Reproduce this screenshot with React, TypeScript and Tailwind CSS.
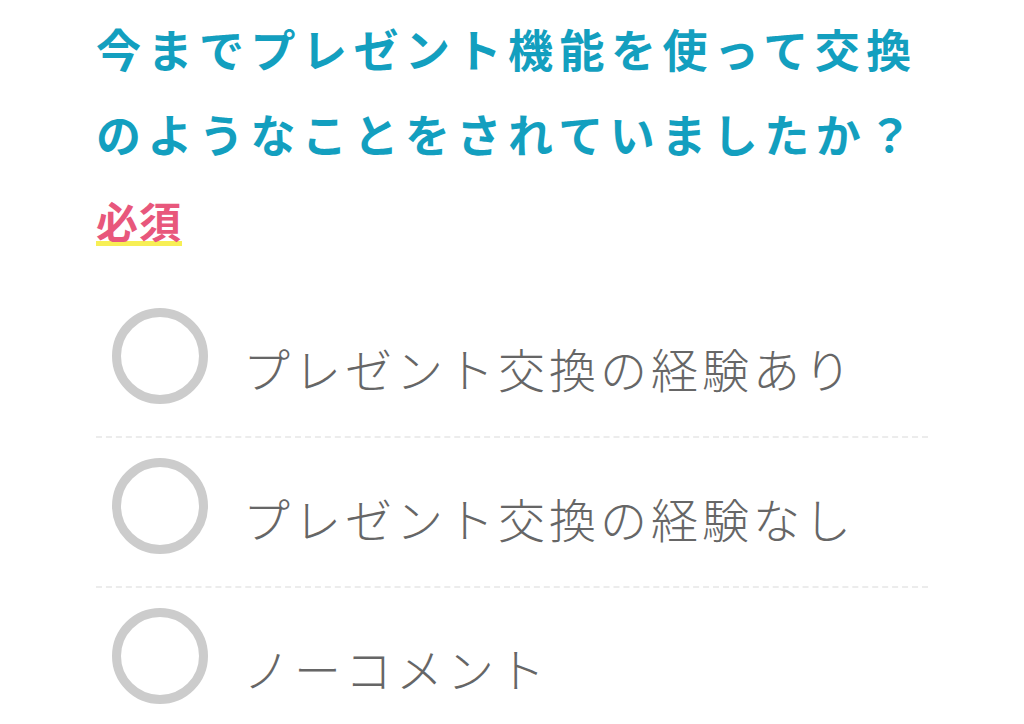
import { Fragment } from "react";

const options = ["プレゼント交換の経験あり", "プレゼント交換の経験なし", "ノーコメント"];

export default function App() {
  return (
    <div
      className="w-[1024px] h-[724px] bg-white overflow-hidden pl-[96px] pr-[96px] pt-[6px]"
      style={{ fontFamily: '"Noto Sans CJK JP", "Noto Sans", sans-serif' }}
    >
      {/* 質問 */}
      <h1 className="text-[45px] leading-[85px] font-bold tracking-[6.5px] text-[#139fbf]">
        今までプレゼント機能を使って交換
        <br />
        のようなことをされていましたか？
      </h1>

      {/* 必須 */}
      <div className="mt-[23px] flex">
        <span className="text-[42px] leading-[42px] font-bold tracking-[1px] text-[#e8577c] border-b-[5px] border-[#f7ef55]">
          必須
        </span>
      </div>

      {/* 選択肢 */}
      <div className="mt-[42px]">
        {options.map((label, i) => (
          <Fragment key={label}>
            {i > 0 && <div className="border-t-2 border-dashed border-[#ececec]" />}
            <label className="flex items-center pt-[20px] pb-[32px] pl-[16px]">
              <span className="w-[96px] h-[96px] rounded-full border-[9px] border-[#cccccc] flex-none" />
              <span className="ml-[35px] pt-[24px] text-[47px] leading-[60px] font-light tracking-[4px] text-[#666666]">
                {label}
              </span>
            </label>
          </Fragment>
        ))}
      </div>
    </div>
  );
}
